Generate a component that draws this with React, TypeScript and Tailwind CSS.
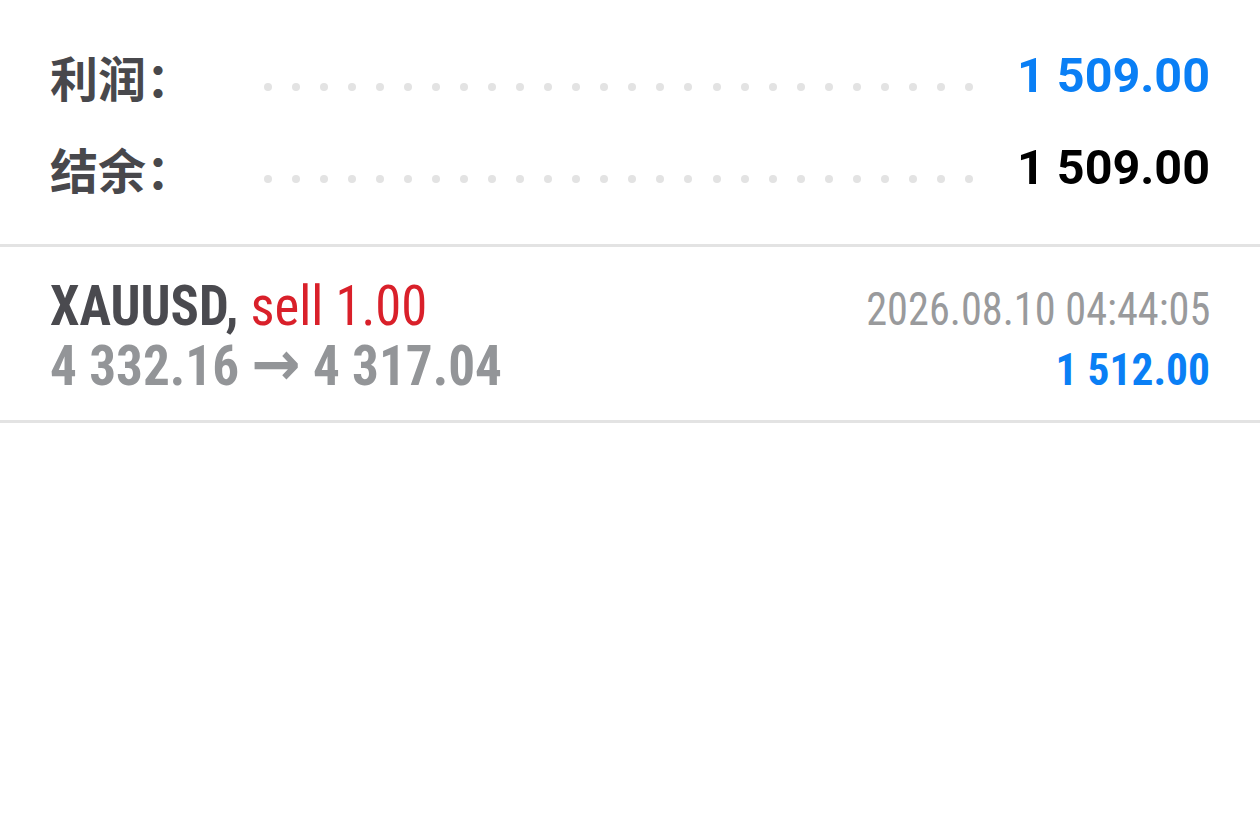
import React from 'react';

const cjk = { fontFamily: '"Noto Sans CJK SC", "Noto Sans", sans-serif' };
const roboto = { fontFamily: 'Roboto, "Noto Sans", sans-serif' };
const cond = { fontFamily: '"Roboto Condensed", Roboto, sans-serif' };
const arrowFont = { fontFamily: '"DejaVu Sans", sans-serif' };

const Dots: React.FC = () => (
  <div className="ml-[70px] mr-[44px] mt-[22px] flex flex-1 justify-between">
    {Array.from({ length: 26 }).map((_, i) => (
      <span key={i} className="block h-[8px] w-[8px] rounded-full bg-[#e3e3e3]" />
    ))}
  </div>
);

const SummaryRow: React.FC<{ label: string; value: string; color: string }> = ({ label, value, color }) => (
  <div className="flex h-[92px] items-center">
    <div className="text-[48px] font-bold leading-none text-[#48484c]" style={cjk}>
      {label}
    </div>
    <Dots />
    <div className={`text-[48.5px] font-bold leading-none ${color}`} style={roboto}>
      {value}
    </div>
  </div>
);

export default function App() {
  return (
    <div className="min-h-[832px] w-full bg-white">
      <div className="px-[50px] pt-[30px] pb-[30px]">
        <SummaryRow label="利润：" value="1 509.00" color="text-[#0a7ff5]" />
        <SummaryRow label="结余：" value="1 509.00" color="text-black" />
      </div>

      <div className="h-[3px] bg-[#e3e3e3]" />

      {/* deal row */}
      <div className="flex justify-between px-[50px] pt-[29px] pb-[24px] text-[56px] leading-[60px]" style={cond}>
        <div className="whitespace-nowrap">
          <div>
            <span className="inline-block origin-left scale-x-[0.94] leading-none">
              <span className="font-bold text-[#4a4a4f]">XAUUSD,</span>
              <span className="text-[#d9202a]"> sell 1.00</span>
            </span>
          </div>
          <div>
            <span className="inline-block origin-left scale-x-[0.95] font-bold leading-none text-[#939598]">
              4 332.16 <span className="text-[62px] leading-[40px]" style={arrowFont}>→</span> 4 317.04
            </span>
          </div>
        </div>
        <div className="whitespace-nowrap text-right">
          <div>
            <span className="inline-block origin-right scale-x-[0.9] text-[47px] leading-none text-[#999a9c]">2026.08.10 04:44:05</span>
          </div>
          <div>
            <span className="inline-block origin-right scale-x-[0.965] text-[45px] font-bold leading-none text-[#0a7ff5]">1 512.00</span>
          </div>
        </div>
      </div>

      <div className="h-[3px] bg-[#e3e3e3]" />
    </div>
  );
}
